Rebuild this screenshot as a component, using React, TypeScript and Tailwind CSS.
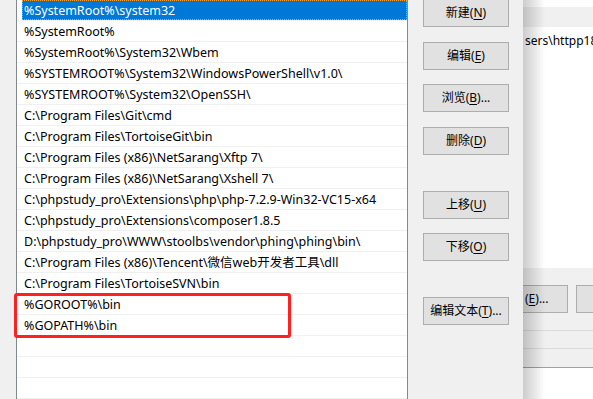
const paths = [
  '%SystemRoot%\\system32',
  '%SystemRoot%',
  '%SystemRoot%\\System32\\Wbem',
  '%SYSTEMROOT%\\System32\\WindowsPowerShell\\v1.0\\',
  '%SYSTEMROOT%\\System32\\OpenSSH\\',
  'C:\\Program Files\\Git\\cmd',
  'C:\\Program Files\\TortoiseGit\\bin',
  'C:\\Program Files (x86)\\NetSarang\\Xftp 7\\',
  'C:\\Program Files (x86)\\NetSarang\\Xshell 7\\',
  'C:\\phpstudy_pro\\Extensions\\php\\php-7.2.9-Win32-VC15-x64',
  'C:\\phpstudy_pro\\Extensions\\composer1.8.5',
  'D:\\phpstudy_pro\\WWW\\stoolbs\\vendor\\phing\\phing\\bin\\',
  'C:\\Program Files (x86)\\Tencent\\微信web开发者工具\\dll',
  'C:\\Program Files\\TortoiseSVN\\bin',
  '%GOROOT%\\bin',
  '%GOPATH%\\bin',
  '',
  '',
  '',
];

const font = { fontFamily: '"Noto Sans", "Noto Sans CJK SC", sans-serif' };

function Btn({ label, hot, suffix, className }: { label: string; hot: string; suffix?: string; className?: string }) {
  return (
    <div
      className={`w-[86px] h-[28px] shrink-0 border border-[#adadad] bg-[#e1e1e1] flex items-center justify-center text-[12px] text-black whitespace-nowrap ${className ?? ''}`}
    >
      {label}(<span className="underline underline-offset-2">{hot}</span>){suffix}
    </div>
  );
}

export default function App() {
  return (
    <div className="w-[593px] h-[399px] relative overflow-hidden bg-white flex" style={font}>
      {/* left gutter */}
      <div className="w-[16px] shrink-0 bg-[#f0f0f0]" />

      {/* path list */}
      <div className="w-[392px] shrink-0 border-x border-[#828790] bg-white overflow-hidden">
        {paths.map((p, i) => (
          <div key={i} className="h-[21px] border-b border-[#f0f0f0] flex">
            <div
              className={`h-[20px] pt-[2px] flex items-center whitespace-nowrap text-[12.5px] ${
                i === 0
                  ? 'ml-[5px] flex-1 bg-[#0078d7] text-white outline-1 outline-dotted outline-[#f0a030] -outline-offset-1 pl-[2px]'
                  : 'pl-[7px] text-black'
              }`}
            >
              {p}
            </div>
          </div>
        ))}
      </div>

      {/* buttons */}
      <div className="w-[115px] shrink-0 bg-[#f0f0f0] flex flex-col pl-[15px]">
        <Btn label="新建" hot="N" className="-mt-px" />
        <Btn label="编辑" hot="E" className="mt-[15px]" />
        <Btn label="浏览" hot="B" suffix="..." className="mt-[14px]" />
        <Btn label="删除" hot="D" className="mt-[15px]" />
        <Btn label="上移" hot="U" className="mt-[36px]" />
        <Btn label="下移" hot="O" className="mt-[14px]" />
        <Btn label="编辑文本" hot="T" suffix="..." className="mt-[36px]" />
      </div>

      {/* window behind */}
      <div className="flex-1 relative overflow-hidden flex flex-col">
        <div className="h-[7px] shrink-0" />
        <div className="h-[20px] shrink-0 bg-[#f0f0f0]" />
        <div className="h-[28px] shrink-0 flex items-center pl-[2px] text-[12px] text-black whitespace-nowrap">
          sers\httpp18
        </div>
        <div className="h-[213px] shrink-0" />
        <div className="h-[100px] shrink-0 bg-[#f0f0f0] border-b border-[#a0a0a0] flex flex-col">
          <div className="mt-[17px] flex gap-[8px]">
            <div className="w-[45px] h-[28px] shrink-0 border border-l-0 border-[#adadad] bg-[#e1e1e1] flex items-center pl-[2px] text-[12px] text-black whitespace-nowrap">
              (<span className="underline underline-offset-2">E</span>)...
            </div>
            <div className="w-[60px] h-[28px] shrink-0 border border-[#adadad] bg-[#e1e1e1]" />
          </div>
          <div className="mt-[17px] border-b border-[#dadada]" />
          <div className="mt-[17px] border-b border-[#dadada]" />
        </div>
        <div className="absolute inset-y-0 left-0 w-[22px] bg-gradient-to-r from-black/20 to-transparent" />
      </div>

      {/* highlight box */}
      <div className="absolute left-[14px] top-[293px] w-[277px] h-[45px] border-[3px] border-[#ff2020] rounded-[3px]" />
    </div>
  );
}
